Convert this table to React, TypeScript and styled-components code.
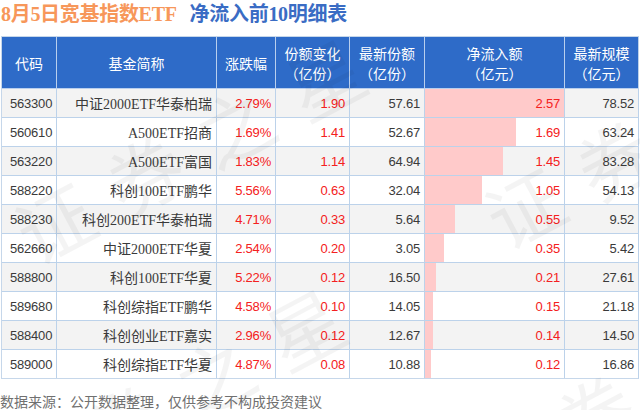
import React from "react";
import styled, { createGlobalStyle } from "styled-components";

const GlobalStyle = createGlobalStyle`
  html, body { margin: 0; padding: 0; background: #ffffff; }
  * { box-sizing: border-box; }
`;

const CJK = `"Noto Sans CJK SC", "Noto Sans", sans-serif`;
const SERIF_CJK = `"Liberation Serif", "Noto Sans CJK SC", serif`;
const NUM = `"Liberation Sans", "Noto Sans CJK SC", sans-serif`;

const Page = styled.div`
  position: relative;
  width: 640px;
  height: 410px;
  overflow: hidden;
  background: #fff;
`;

const TitleBar = styled.div`
  height: 36px;
  padding: 2px 0 0 1px;
  display: flex;
  align-items: flex-start;
  gap: 13px;
  font-family: ${SERIF_CJK};
  font-weight: 700;
  font-size: 20px;
  line-height: 24px;
  letter-spacing: -0.3px;
`;

const TitlePart = styled.span<{ $tone: "orange" | "blue" }>`
  color: ${(p) => (p.$tone === "orange" ? "#f7975a" : "#3a6cc4")};
`;

const Table = styled.div`
  margin-left: 1px;
  width: 638px;
  border: 1px solid #c6d7ea;
  border-right-color: #bcd2ea;
`;

const COLS = "55px 160px 59px 74px 75px 140px 1fr";

const HeadRow = styled.div`
  display: grid;
  grid-template-columns: ${COLS};
  height: 52px;
  background: #2e6bc8;
`;

const HeadCell = styled.div`
  display: flex;
  flex-direction: column;
  align-items: center;
  justify-content: center;
  border-right: 1px solid #b9cfee;
  border-bottom: 1px solid #b9cfee;
  color: #ffffff;
  font-family: ${CJK};
  font-size: 14px;
  line-height: 20px;
  &:last-child { border-right: none; }
`;

const Row = styled.div<{ $shade: boolean }>`
  display: grid;
  grid-template-columns: ${COLS};
  height: 29px;
  background: ${(p) => (p.$shade ? "#f3f3f3" : "#ffffff")};
`;

const Cell = styled.div<{ $align?: "left" | "right"; $red?: boolean; $serif?: boolean }>`
  position: relative;
  display: flex;
  align-items: center;
  justify-content: ${(p) => (p.$align === "left" ? "flex-start" : "flex-end")};
  padding: ${(p) => (p.$align === "left" ? "0 0 0 8px" : "0 4px 0 0")};
  border-right: 1px solid #bcd2ea;
  border-bottom: 1px solid #bcd2ea;
  color: ${(p) => (p.$red ? "#f42020" : "#3a3a3a")};
  font-family: ${(p) => (p.$serif ? SERIF_CJK : NUM)};
  font-size: ${(p) => (p.$serif ? "14px" : "13px")};
  letter-spacing: ${(p) => (p.$serif ? "0" : "-0.2px")};
  white-space: nowrap;
  &:last-child { border-right: none; }
`;

const RowLast = styled(Row)`
  & > div { border-bottom: none; }
  height: 28px;
`;

const Bar = styled.div`
  position: absolute;
  left: 0;
  top: 0;
  bottom: 0;
  background: #ffcaca;
`;

const CellText = styled.span`
  position: relative;
`;

const Footer = styled.div`
  padding: 14px 0 0 0;
  font-family: ${CJK};
  font-size: 14px;
  line-height: 16px;
  color: #707070;
`;

const Watermarks = styled.div`
  position: absolute;
  inset: 0;
  pointer-events: none;
`;

const Mark = styled.span`
  position: absolute;
  font-family: ${CJK};
  font-size: 76px;
  line-height: 1;
  letter-spacing: 26px;
  color: rgba(0, 0, 0, 0.045);
  white-space: nowrap;
  transform-origin: left center;
  transform: rotate(-28deg);
`;

type Item = {
  code: string;
  name: string;
  chg: string;
  delta: string;
  shares: string;
  flow: number;
  scale: string;
};

const DATA: Item[] = [
  { code: "563300", name: "中证2000ETF华泰柏瑞", chg: "2.79%", delta: "1.90", shares: "57.61", flow: 2.57, scale: "78.52" },
  { code: "560610", name: "A500ETF招商", chg: "1.69%", delta: "1.41", shares: "52.67", flow: 1.69, scale: "63.24" },
  { code: "563220", name: "A500ETF富国", chg: "1.83%", delta: "1.14", shares: "64.94", flow: 1.45, scale: "83.28" },
  { code: "588220", name: "科创100ETF鹏华", chg: "5.56%", delta: "0.63", shares: "32.04", flow: 1.05, scale: "54.13" },
  { code: "588230", name: "科创200ETF华泰柏瑞", chg: "4.71%", delta: "0.33", shares: "5.64", flow: 0.55, scale: "9.52" },
  { code: "562660", name: "中证2000ETF华夏", chg: "2.54%", delta: "0.20", shares: "3.05", flow: 0.35, scale: "5.42" },
  { code: "588800", name: "科创100ETF华夏", chg: "5.22%", delta: "0.12", shares: "16.50", flow: 0.21, scale: "27.61" },
  { code: "589680", name: "科创综指ETF鹏华", chg: "4.58%", delta: "0.10", shares: "14.05", flow: 0.15, scale: "21.18" },
  { code: "588400", name: "科创创业ETF嘉实", chg: "2.96%", delta: "0.12", shares: "12.67", flow: 0.14, scale: "14.50" },
  { code: "589000", name: "科创综指ETF华夏", chg: "4.87%", delta: "0.08", shares: "10.88", flow: 0.12, scale: "16.86" },
];

const MAX_FLOW = 2.57;

const HEADERS: string[][] = [
  ["代码"],
  ["基金简称"],
  ["涨跌幅"],
  ["份额变化", "（亿份）"],
  ["最新份额", "（亿份）"],
  ["净流入额", "（亿元）"],
  ["最新规模", "（亿元）"],
];

function DataRow({ item, index }: { item: Item; index: number }) {
  const Comp = index === DATA.length - 1 ? RowLast : Row;
  return (
    <Comp $shade={index % 2 === 0}>
      <Cell $align="left">{item.code}</Cell>
      <Cell $serif>{item.name}</Cell>
      <Cell $red>{item.chg}</Cell>
      <Cell $red>{item.delta}</Cell>
      <Cell>{item.shares}</Cell>
      <Cell $red>
        <Bar style={{ width: `${(item.flow / MAX_FLOW) * 100}%` }} />
        <CellText>{item.flow.toFixed(2)}</CellText>
      </Cell>
      <Cell>{item.scale}</Cell>
    </Comp>
  );
}

export default function App() {
  return (
    <Page>
      <GlobalStyle />
      <TitleBar>
        <TitlePart $tone="orange">8月5日宽基指数ETF</TitlePart>
        <TitlePart $tone="blue">净流入前10明细表</TitlePart>
      </TitleBar>
      <Table>
        <HeadRow>
          {HEADERS.map((lines, i) => (
            <HeadCell key={i}>
              {lines.map((l) => (
                <span key={l}>{l}</span>
              ))}
            </HeadCell>
          ))}
        </HeadRow>
        {DATA.map((item, i) => (
          <DataRow key={item.code} item={item} index={i} />
        ))}
      </Table>
      <Footer>数据来源：公开数据整理，仅供参考不构成投资建议</Footer>
      <Watermarks>
        <Mark style={{ left: 20, top: 200 }}>证券之星</Mark>
        <Mark style={{ left: 490, top: 185 }}>证券之星</Mark>
        <Mark style={{ left: 0, top: 450 }}>证券之星</Mark>
        <Mark style={{ left: 470, top: 440 }}>证券之星</Mark>
      </Watermarks>
    </Page>
  );
}
